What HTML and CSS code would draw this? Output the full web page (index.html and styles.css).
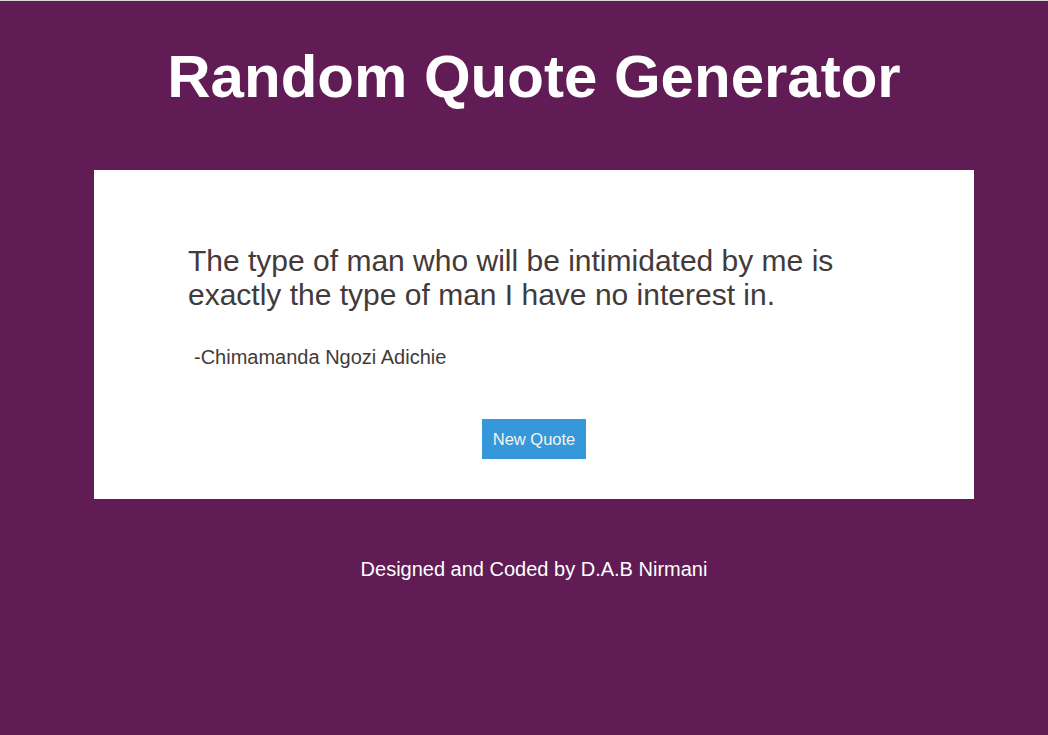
FILE: index.html
```html
<!DOCTYPE html>
<html>
<head>
<meta charset="utf-8">
<link rel="stylesheet" href="styles.css">
</head>
<body>
<div class="page">
  <h1 class="title">Random Quote Generator</h1>
  <div class="card">
    <p class="quote">The type of man who will be intimidated by me is exactly the type of man I have no interest in.</p>
    <p class="author">-Chimamanda Ngozi Adichie</p>
    <div class="actions"><button class="btn">New Quote</button></div>
  </div>
  <p class="footer">Designed and Coded by D.A.B Nirmani</p>
</div>
</body>
</html>
```
FILE: styles.css
```css
html, body {
  margin: 0;
  padding: 0;
  height: 100%;
}
body {
  background: #611c55;
  font-family: "Liberation Sans", Arial, sans-serif;
  border-top: 1px solid #d8d8d8;
  box-sizing: border-box;
}
.page {
  padding-left: 20px;
  display: flex;
  flex-direction: column;
  align-items: center;
}
.title {
  margin: 38px 0 0;
  color: #fff;
  font-size: 60px;
  font-weight: bold;
  line-height: 76px;
}
.card {
  margin-top: 55px;
  width: 880px;
  height: 329px;
  box-sizing: border-box;
  background: #fff;
  padding: 74px 94px 0;
}
.quote {
  margin: 0;
  color: #433a3a;
  font-size: 30px;
  line-height: 34px;
}
.author {
  margin: 33px 0 0 6px;
  color: #433a3a;
  font-size: 20px;
  line-height: 24px;
}
.actions {
  display: flex;
  justify-content: center;
  margin-top: 50px;
}
.btn {
  width: 104px;
  height: 40px;
  border: none;
  background: #3698db;
  color: #f4f4ee;
  font-family: "Liberation Sans", Arial, sans-serif;
  font-size: 16.5px;
  padding: 0;
}
.footer {
  margin: 58px 0 0;
  color: #fff;
  font-size: 20px;
  line-height: 24px;
}
```
